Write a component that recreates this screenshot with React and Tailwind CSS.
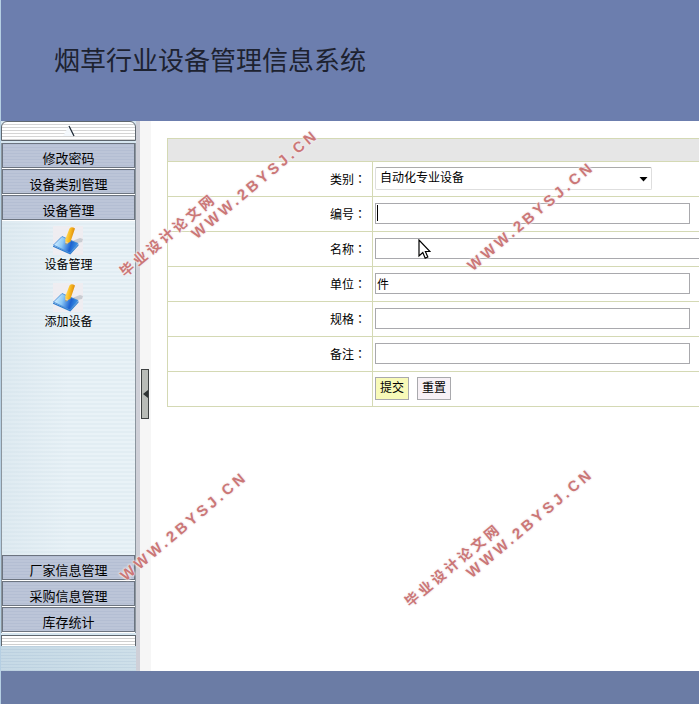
import { useState } from 'react';

const TOP_MENUS = ['修改密码', '设备类别管理', '设备管理'];
const BOTTOM_MENUS = ['厂家信息管理', '采购信息管理', '库存统计'];
const SHORTCUTS = ['设备管理', '添加设备'];

const FIELDS = [
  { id: 'code', label: '编号', value: '', width: 'w-[315px]', caret: true },
  { id: 'name', label: '名称', value: '', width: 'w-[420px]' },
  { id: 'unit', label: '单位', value: '件', width: 'w-[315px]' },
  { id: 'spec', label: '规格', value: '', width: 'w-[315px]' },
  { id: 'remark', label: '备注', value: '', width: 'w-[315px]' },
];

// Diagonal stamps, placed by their centre point.
const STAMPS = [
  { text: '毕业设计论文网', place: 'left-[168px] top-[235px] text-[14px]' },
  { text: 'WWW.2BYSJ.CN', place: 'left-[255px] top-[184px] text-[15px]' },
  { text: 'WWW.2BYSJ.CN', place: 'left-[531px] top-[216px] text-[15px]' },
  { text: 'WWW.2BYSJ.CN', place: 'left-[184px] top-[526px] text-[15px]' },
  { text: '毕业设计论文网', place: 'left-[453px] top-[565px] text-[14px]' },
  { text: 'WWW.2BYSJ.CN', place: 'left-[530px] top-[523px] text-[15px]' },
];

function PencilIcon() {
  return (
    <svg width="30" height="29" viewBox="0 0 30 29" aria-hidden="true">
      <defs>
        <linearGradient id="sheet" x1="0" y1="0.4" x2="1" y2="0.6">
          <stop offset="0%" stopColor="#d9f1ff" />
          <stop offset="35%" stopColor="#8cc9f7" />
          <stop offset="70%" stopColor="#1d62cf" />
          <stop offset="100%" stopColor="#3f9bea" />
        </linearGradient>
        <linearGradient id="barrel" x1="0" y1="0" x2="1" y2="0.3">
          <stop offset="0%" stopColor="#ffe88a" />
          <stop offset="50%" stopColor="#fbbf24" />
          <stop offset="100%" stopColor="#d98309" />
        </linearGradient>
      </defs>
      <rect width="30" height="29" fill="#efedf1" />
      <path d="M19 15 L27 12 L30 13 L29 16 L20 18 Z" fill="#c9ccd2" />
      <path d="M0.5 19 L9 10.5 L25 17.5 L17 27 Z" fill="url(#sheet)" stroke="#3b86d6" strokeWidth="0.8" />
      <path d="M0 19.5 L17 27 L25.5 18 L25.5 19.5 L17.3 28.5 L0 20.8 Z" fill="#2d7ccf" />
      <path d="M16.5 2.5 Q18.5 0 22 2.5 L17.6 15.5 L12.8 18.5 L12.2 13.5 Z" fill="url(#barrel)" />
      <path d="M12.4 15.3 L15.4 16.8 L12.8 18.5 Z" fill="#f1d3a0" />
      <path d="M12.6 17.2 L13.8 17.8 L12.8 18.5 Z" fill="#4b4b4b" />
    </svg>
  );
}

function MenuBar({ children }) {
  return (
    <button
      type="button"
      className="block h-[26px] w-full border-b border-white text-center text-[13px] leading-5 text-black"
    >
      <span className="block h-[25px] border border-[#6c7480] bg-[repeating-linear-gradient(#b4bed3_0_1px,#bcc5d8_1px_3px)] pt-[5px]">
        {children}
      </span>
    </button>
  );
}

function Sidebar() {
  return (
    <aside className="flex w-[135px] shrink-0 flex-col bg-[#d6e6f0]">
      <div className="flex h-5 items-center justify-center rounded-t-md border border-[#5f676f] bg-[repeating-linear-gradient(#ffffff_0_2px,#d5d5d5_2px_3px)]">
        <svg width="14" height="12" viewBox="0 0 14 12" aria-hidden="true">
          <path d="M1 11 L7 1 L12 11 Z" fill="#f4f8fc" />
          <path d="M7 1 L12 11" stroke="#1c2733" strokeWidth="1.2" />
        </svg>
      </div>
      <nav className="mt-0.5 flex grow flex-col border-x border-[#8b959e] bg-[linear-gradient(90deg,#c9dbe555,#ffffff00_50%),repeating-linear-gradient(#e2edf3_0_2px,#e9f2f7_2px_4px)]">
        {TOP_MENUS.map((label) => (
          <MenuBar key={label}>{label}</MenuBar>
        ))}
        <div className="flex grow flex-col items-center gap-2 pt-[5px]">
          {SHORTCUTS.map((label) => (
            <a key={label} href="#" className="flex flex-col items-center text-[12px] leading-5 text-black">
              <PencilIcon />
              {label}
            </a>
          ))}
        </div>
        {BOTTOM_MENUS.map((label) => (
          <MenuBar key={label}>{label}</MenuBar>
        ))}
      </nav>
      <div className="mt-0.5 h-[11px] border border-b-0 border-[#5f676f] bg-[repeating-linear-gradient(#ffffff_0_2px,#cfcfcf_2px_3px)]" />
      <div className="h-[25px] bg-[linear-gradient(90deg,#b7cddd77,#c9dbe577),repeating-linear-gradient(#bfd3e2_0_1px,#d3e4ed_1px_3px)]" />
    </aside>
  );
}

function Stamp({ text, place }) {
  return (
    <span
      aria-hidden="true"
      className={`pointer-events-none absolute -translate-x-1/2 -translate-y-1/2 -rotate-[40deg] leading-4 font-bold tracking-[0.23em] whitespace-nowrap text-[#cb7777] [text-shadow:0_0_2px_#f4ecee,0_0_2px_#f4ecee,0_0_3px_#f4ecee] ${place}`}
    >
      {text}
    </span>
  );
}

function FieldLabel({ htmlFor, children }) {
  return (
    <th className="w-[205px] pr-1.5 text-right font-normal">
      <label htmlFor={htmlFor}>
        {children}
        <span className="font-['Noto_Sans_CJK_TC',sans-serif]">：</span>
      </label>
    </th>
  );
}

function DeviceForm() {
  const [values, setValues] = useState(() => Object.fromEntries(FIELDS.map((f) => [f.id, f.value])));
  const update = (id) => (e) => setValues((v) => ({ ...v, [id]: e.target.value }));

  return (
    <form onSubmit={(e) => e.preventDefault()}>
      <table className="w-[640px] border-collapse text-[12px] leading-5 text-black [&_td]:border [&_td]:border-[#d4d9b4] [&_th]:border [&_th]:border-[#d4d9b4]">
        <tbody>
          <tr className="h-[23px] bg-[#e6e6e6]">
            <td colSpan={2} />
          </tr>
          <tr className="h-[35px]">
            <FieldLabel htmlFor="category">类别</FieldLabel>
            <td className="px-0.5 pb-0.5">
              <div className="relative w-[277px]">
                <select
                  id="category"
                  className="block h-[23px] w-full appearance-none rounded-xs border border-[#dedede] border-t-[#ababab] bg-white px-1 leading-5"
                >
                  <option>自动化专业设备</option>
                </select>
                <svg className="pointer-events-none absolute top-2.5 right-1" width="9" height="6" viewBox="0 0 9 6" aria-hidden="true">
                  <path d="M0.5 0 H8.5 L4.5 4.5 Z" fill="#000" />
                </svg>
              </div>
            </td>
          </tr>
          {FIELDS.map((f) => (
            <tr key={f.id} className="h-[35px]">
              <FieldLabel htmlFor={f.id}>{f.label}</FieldLabel>
              <td className="px-0.5 pb-0.5">
                <div className="relative">
                  <input
                    id={f.id}
                    type="text"
                    value={values[f.id]}
                    onChange={update(f.id)}
                    className={`block h-[21px] border border-[#a9a9ad] bg-white px-px leading-4 outline-none ${f.width}`}
                  />
                  {f.caret && <span className="absolute top-0.5 left-0.5 h-4 w-px bg-black" />}
                </div>
              </td>
            </tr>
          ))}
          <tr className="h-[35px]">
            <td />
            <td className="px-0.5 pb-0.5">
              <div className="flex gap-2">
                <button type="submit" className="h-[23px] border border-[#a9a9ad] bg-[#f8fab8] px-1">
                  提交
                </button>
                <button type="reset" className="h-[23px] border border-[#a9a9ad] bg-[#f7f1f6] px-1">
                  重置
                </button>
              </div>
            </td>
          </tr>
        </tbody>
      </table>
    </form>
  );
}

export default function App() {
  return (
    <div className="relative flex min-h-screen flex-col overflow-hidden bg-[#b5cfe3] pl-px font-['Liberation_Sans','Noto_Sans_CJK_SC',sans-serif]">
      <header className="flex h-[121px] items-center bg-[#6c7eae] px-[53px]">
        <h1 className="text-[26px] leading-10 text-[#1d2230]">烟草行业设备管理信息系统</h1>
      </header>

      <div className="flex grow bg-white">
        <Sidebar />
        <div className="flex w-[15px] shrink-0 items-center border-l-4 border-[#cfd0d8] bg-[#f6f6f6] pb-1 pl-px">
          <button
            type="button"
            aria-label="收起"
            className="flex h-[50px] w-2 items-center justify-center border border-[#3f4242] bg-[#b9bcb7]"
          >
            <svg width="5" height="8" viewBox="0 0 5 8" className="shrink-0" aria-hidden="true">
              <path d="M5 0 V8 L0 4 Z" fill="#2f3333" />
            </svg>
          </button>
        </div>
        <main className="min-w-0 grow overflow-hidden pt-[17px] pl-4">
          <DeviceForm />
        </main>
      </div>

      <footer className="h-[33px] bg-[#6b7ca5]" />

      {STAMPS.map((s) => (
        <Stamp key={s.place} text={s.text} place={s.place} />
      ))}

      <svg className="pointer-events-none absolute top-[239px] left-[418px]" width="13" height="21" viewBox="0 0 13 21" aria-hidden="true">
        <path d="M1 1 V17 L4.8 13.5 L7.2 19.2 L9.8 18 L7.4 12.5 H12 Z" fill="#fff" stroke="#000" strokeWidth="1.2" />
      </svg>
    </div>
  );
}
